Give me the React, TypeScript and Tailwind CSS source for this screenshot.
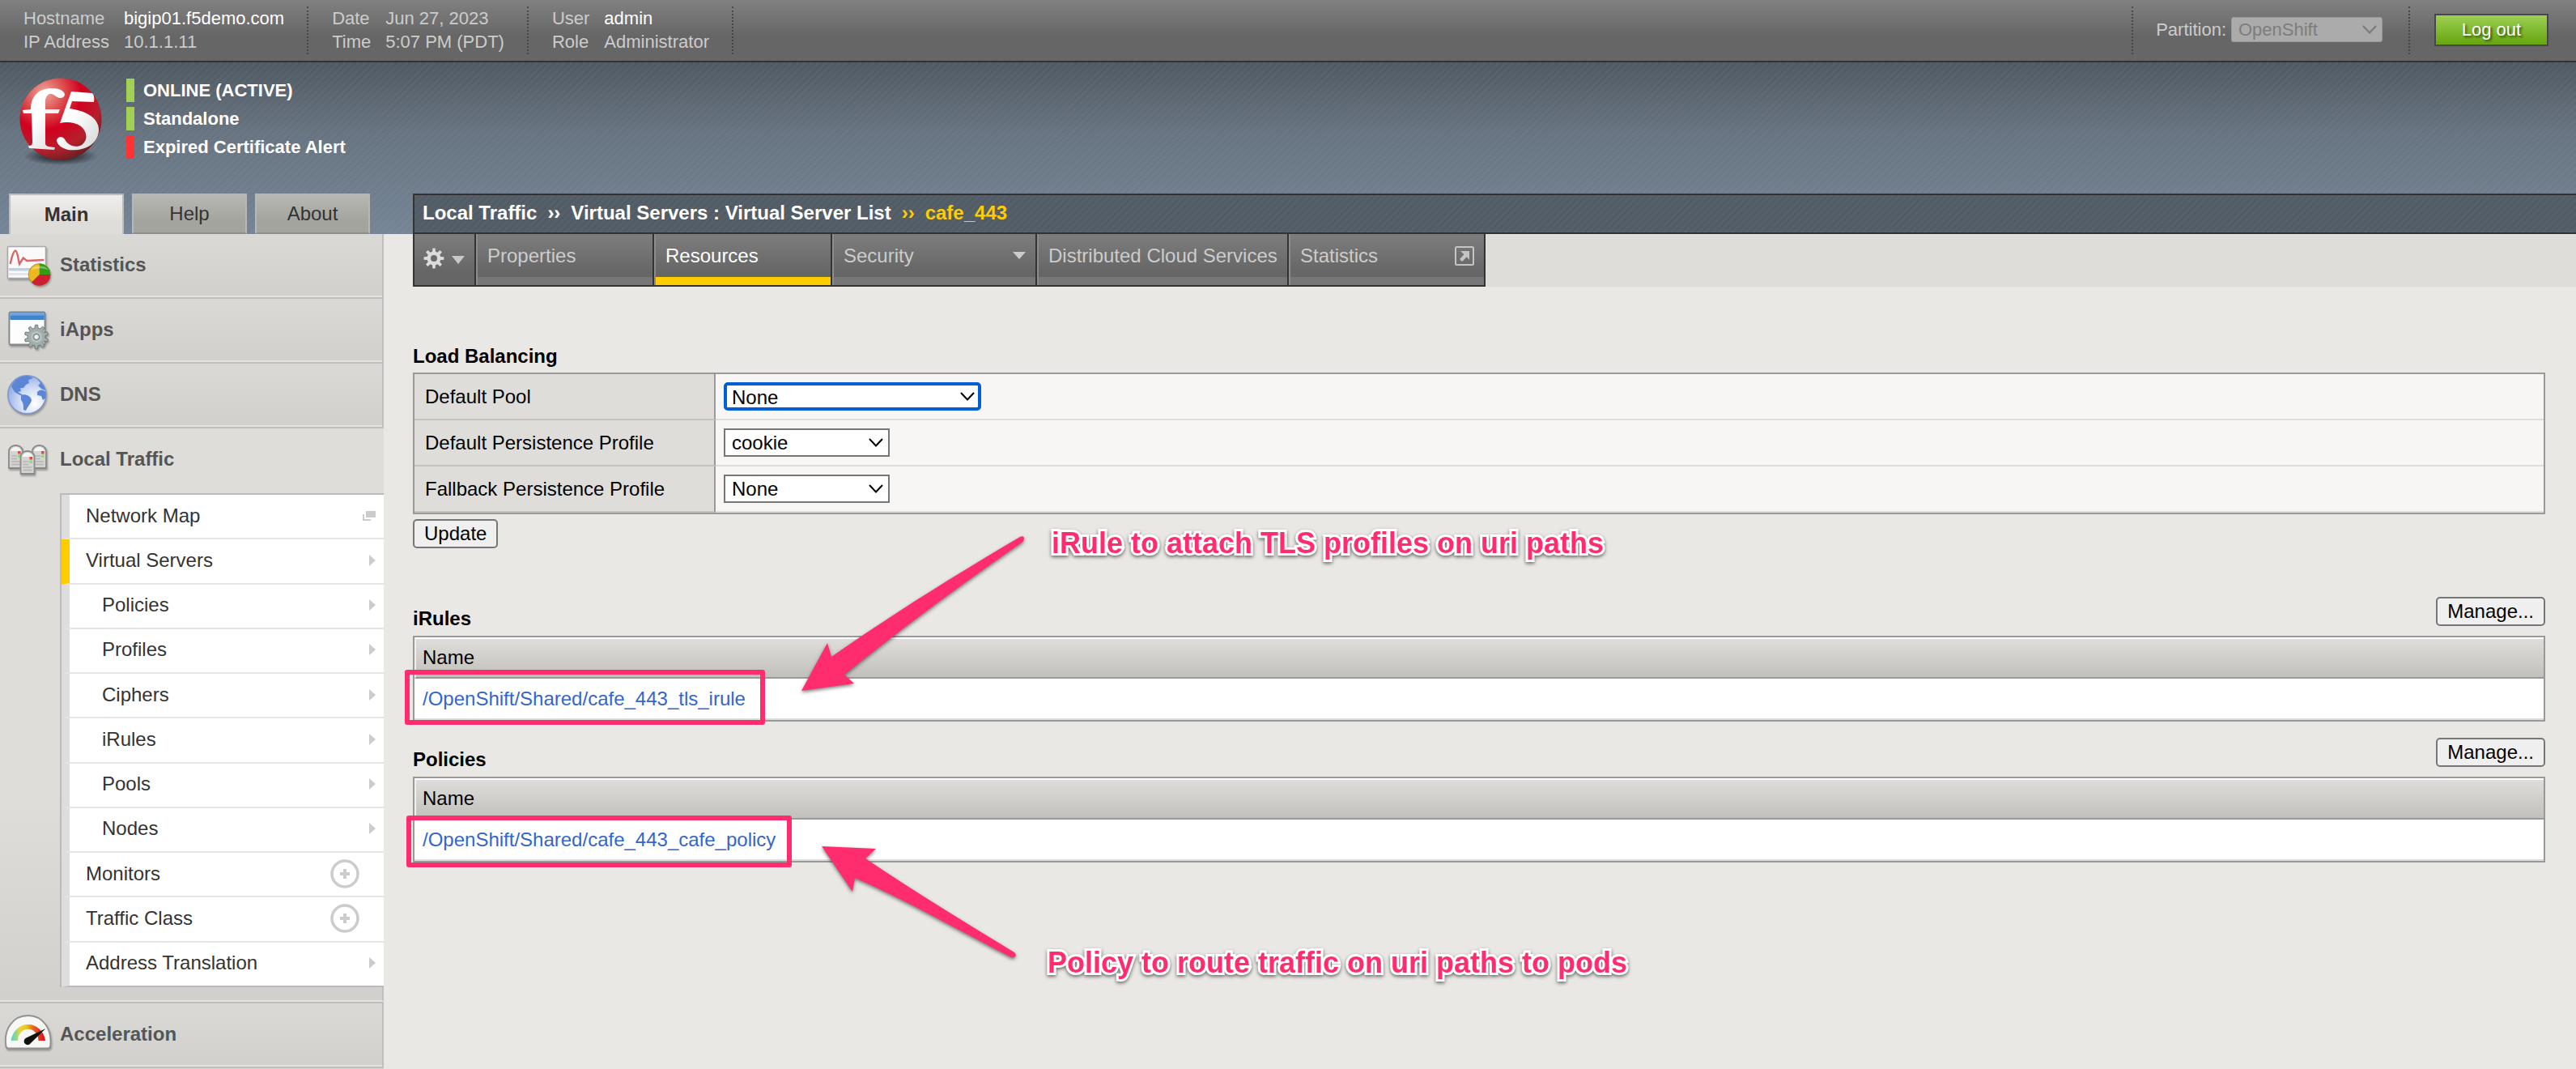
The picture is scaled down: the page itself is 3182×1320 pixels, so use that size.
import React from "react";

const STRIPES =
  "repeating-linear-gradient(135deg,rgba(255,255,255,0.03) 0px,rgba(255,255,255,0.03) 3px,rgba(255,255,255,0) 4px,rgba(255,255,255,0) 6px)";

function teeth(count: number, cx: number, cy: number, inner: number, outer: number) {
  const points: string[] = [];
  const step = (Math.PI * 2) / count;
  for (let i = 0; i < count; i++) {
    const a = i * step - Math.PI / 2;
    const corners: [number, number][] = [
      [-0.3, inner],
      [-0.17, outer],
      [0.17, outer],
      [0.3, inner],
    ];
    corners.forEach(([offset, r]) => {
      const t = a + offset * step;
      points.push(`${(cx + Math.cos(t) * r).toFixed(2)},${(cy + Math.sin(t) * r).toFixed(2)}`);
    });
  }
  return points.join(" ");
}

function Logo() {
  return (
    <svg viewBox="0 0 106 112" className="h-28 w-[106px] shrink-0" role="img" aria-label="f5">
      <defs>
        <radialGradient id="ball" cx="0.3" cy="0.18" r="0.9">
          <stop offset="0" stopColor="#f0a79c" />
          <stop offset="0.28" stopColor="#dc4a4c" />
          <stop offset="0.5" stopColor="#d1001f" />
          <stop offset="0.78" stopColor="#b5202c" />
          <stop offset="1" stopColor="#5c2020" />
        </radialGradient>
        <linearGradient id="mark" x1="0" y1="0" x2="1" y2="1">
          <stop offset="0.4" stopColor="#ffffff" />
          <stop offset="1" stopColor="#d4d4d4" />
        </linearGradient>
        <radialGradient id="ground">
          <stop offset="0.3" stopColor="#1c2126" stopOpacity="0.85" />
          <stop offset="1" stopColor="#1c2126" stopOpacity="0" />
        </radialGradient>
      </defs>
      <ellipse cx="53" cy="98" rx="46" ry="11" fill="url(#ground)" />
      <circle cx="53" cy="52" r="50.5" fill="url(#ball)" />
      <path
        d="M6 41 L16 40 C16 22 28 13 44 14 C52 14 58 18 58 22 C57 27 51 27 47 24 C42 19 35 20 34 29 L34 40 L52 40 L50 45 L34 45 L34 82 C34 86 38 86 46 87 L45 90 L14 88 L13 85 C17 85 18 84 18 80 L17 45 L7 45 Z"
        fill="url(#mark)"
      />
      <path
        d="M66 18 L92 20 C94 22 95 27 94 31 L67 30 L64 39 C86 42 101 52 100 67 C98 84 82 92 62 90 C54 88 48 83 48 78 C50 73 55 73 58 77 C62 85 72 88 79 84 C87 78 86 68 78 61 C71 56 61 55 52 57 Z"
        fill="url(#mark)"
      />
    </svg>
  );
}

function StatisticsIcon() {
  return (
    <svg viewBox="0 0 64 64" className="h-16 w-16 shrink-0 drop-shadow-[1px_2px_1px_rgba(0,0,0,0.3)]" aria-hidden="true">
      <rect x="5.5" y="9.5" width="47" height="39" rx="1" fill="#fafafa" stroke="#a9a9a9" strokeWidth="1.5" />
      <rect x="7" y="36" width="35" height="3.5" fill="#bcd0e6" />
      <rect x="7" y="42" width="30" height="3" fill="#dfe7f0" />
      <path d="M8.7 31 C10 25 12 15 15 14.5 C18 15 18.5 26 20 31 L24.7 23.5 L29.3 27 L50.3 26" fill="none" stroke="#d9666b" strokeWidth="2.4" />
      <circle cx="44.7" cy="44" r="13.5" fill="#edb920" stroke="#8d6b1a" strokeWidth="0.6" />
      <path d="M44.7 44 L44.7 30.5 A13.5 13.5 0 0 1 58.2 44 Z" fill="#2f9e14" />
      <path d="M44.7 44 L58.2 44 A13.5 13.5 0 0 1 35 53.5 Z" fill="#cf1d33" />
      <path d="M34 39 A12 9 0 0 1 56 39 A14 7 0 0 0 34 39" fill="#ffffff" opacity="0.35" />
    </svg>
  );
}

function IAppsIcon() {
  return (
    <svg viewBox="0 0 64 64" className="h-16 w-16 shrink-0 drop-shadow-[1px_2px_1px_rgba(0,0,0,0.3)]" aria-hidden="true">
      <rect x="7.5" y="10.5" width="44" height="40" rx="1.5" fill="#fdfdfd" stroke="#808488" strokeWidth="1.8" />
      <rect x="8.4" y="11.5" width="42.3" height="8.5" fill="#4284cb" />
      <rect x="8.4" y="11.5" width="42.3" height="3" fill="#6aa6e4" />
      <polygon points={teeth(10, 41, 41, 11, 14.8)} fill="#a3adac" stroke="#6f7978" strokeWidth="1" />
      <circle cx="41" cy="41" r="7" fill="#b8c1c0" />
      <circle cx="41" cy="41" r="3.5" fill="#eef0f0" stroke="#7b8584" strokeWidth="1.5" />
    </svg>
  );
}

function DnsIcon() {
  return (
    <svg viewBox="0 0 64 64" className="h-16 w-16 shrink-0 drop-shadow-[1px_2px_1px_rgba(0,0,0,0.3)]" aria-hidden="true">
      <defs>
        <radialGradient id="globe" cx="0.7" cy="0.72" r="0.8">
          <stop offset="0" stopColor="#ffffff" />
          <stop offset="0.5" stopColor="#d0dcf5" />
          <stop offset="1" stopColor="#88a8e4" />
        </radialGradient>
      </defs>
      <circle cx="29.3" cy="32.3" r="23.5" fill="url(#globe)" stroke="#7f96c6" strokeWidth="1.5" />
      <path d="M10 22 C14 13 22 9 31 9 L37 12 L31 14 L32 18 L28 20 L25 24 L21 24 L22 28 L18 29 L26 34 L21 33 L14 29 Z" fill="#5b85d6" />
      <path d="M22 33 C27 31 34 34 35 39 C34 44 30 47 28 52 L25 51 C25 46 25 42 22 39 Z" fill="#5b85d6" />
      <path d="M42 13 C47 16 51 22 52 27 L47 25 L43 21 L46 18 Z M42 29 C46 25 51 26 52.5 30 L52 37 L49 39 L47 34 L42 33 Z" fill="#5b85d6" />
    </svg>
  );
}

function ServerTower({ x, y }: { x: number; y: number }) {
  return (
    <g transform={`translate(${x} ${y})`}>
      <path d="M1 7 Q3 1 9.5 1 Q16 1 18 7 V29 H1 Z" fill="#d4d4d2" stroke="#8a8a8a" strokeWidth="1.8" strokeLinejoin="round" />
      <path d="M3 8 Q5 3 9.5 3 Q14 3 16 8 Z" fill="#f5f5f5" />
      <path d="M4 14 H11 M4 17.5 H11 M4 21 H15 M4 24.5 H15" stroke="#b5b5b5" strokeWidth="1.5" />
      <rect x="12" y="8" width="3.5" height="3.5" fill="#e5484a" />
      <rect x="12" y="12.5" width="3.5" height="3.5" fill="#8fdc78" />
    </g>
  );
}

function LocalTrafficIcon() {
  return (
    <svg viewBox="0 0 64 64" className="h-16 w-16 shrink-0 drop-shadow-[1px_2px_1px_rgba(0,0,0,0.3)]" aria-hidden="true">
      <ServerTower x={6} y={14} />
      <ServerTower x={35} y={14} />
      <ServerTower x={20.5} y={21} />
    </svg>
  );
}

function AccelerationIcon() {
  return (
    <svg viewBox="0 0 64 64" className="h-16 w-16 shrink-0 drop-shadow-[1px_2px_1px_rgba(0,0,0,0.3)]" aria-hidden="true">
      <defs>
        <linearGradient id="gauge" x1="0" y1="0" x2="1" y2="0">
          <stop offset="0" stopColor="#5fd3c8" />
          <stop offset="0.12" stopColor="#7fd6a8" />
          <stop offset="0.25" stopColor="#e6d53a" />
          <stop offset="0.45" stopColor="#ecc51f" />
          <stop offset="0.65" stopColor="#e8641d" />
          <stop offset="1" stopColor="#e00a17" />
        </linearGradient>
      </defs>
      <path d="M3.5 47 C0 26 12 9 30.7 9 C49 9 61 26 58 47 Q57.5 49.5 55 49.5 H6.5 Q4 49.5 3.5 47 Z" fill="#f7f7f5" stroke="#919191" strokeWidth="1.8" />
      <path d="M9.5 40 A21.5 23.5 0 0 1 52 40 H43.5 A12.5 14 0 0 0 18 40 Z" fill="url(#gauge)" />
      <path d="M52.5 25 L34 43 A4.5 4.5 0 1 1 28.5 36.5 Z" fill="#111111" />
    </svg>
  );
}

function Chevron({ className }: { className: string }) {
  return (
    <svg viewBox="0 0 18 11" className={className} aria-hidden="true">
      <path d="M1 1 L9 9.5 L17 1" fill="none" stroke="currentColor" strokeWidth="2" />
    </svg>
  );
}

function InfoBlock({ rows }: { rows: [string, string, boolean][] }) {
  return (
    <dl className="grid h-[59px] grid-cols-[auto_auto] content-start gap-x-[18px] border-r-2 border-dotted border-[#474747] pr-7 pl-[29px] text-[22px] leading-[29px] text-[#cccccc]">
      {rows.map(([label, value, strong]) => (
        <React.Fragment key={label}>
          <dt>{label}</dt>
          <dd className={strong ? "text-white" : ""}>{value}</dd>
        </React.Fragment>
      ))}
    </dl>
  );
}

function TopBar() {
  return (
    <header className="flex items-start border-b-2 border-[#333333] bg-[linear-gradient(#808080_0%,#666666_60%)] pt-2 pb-2">
      <InfoBlock
        rows={[
          ["Hostname", "bigip01.f5demo.com", true],
          ["IP Address", "10.1.1.11", false],
        ]}
      />
      <InfoBlock
        rows={[
          ["Date", "Jun 27, 2023", false],
          ["Time", "5:07 PM (PDT)", false],
        ]}
      />
      <InfoBlock
        rows={[
          ["User", "admin", true],
          ["Role", "Administrator", false],
        ]}
      />
      <div className="ml-auto flex items-start">
        <div className="flex h-[59px] items-center border-x-2 border-dotted border-[#474747] pr-8 pb-0.5 pl-7 text-[22px] text-[#cccccc]">
          <label htmlFor="partition" className="mr-1.5">
            Partition:
          </label>
          <div className="relative">
            <select
              id="partition"
              disabled
              className="block h-[31px] w-[187px] appearance-none rounded-[3px] border border-[#999999] bg-[#ababab] pl-2 leading-[28px] text-[#7d7d7d] opacity-100"
            >
              <option>OpenShift</option>
            </select>
            <Chevron className="pointer-events-none absolute top-[10px] right-[7px] h-[11px] w-[18px] text-[#7a7a7a]" />
          </div>
        </div>
        <button className="mt-[9px] mr-[34px] ml-[30px] h-10 w-[141px] border-2 border-[#474747] bg-[linear-gradient(#9dcf52,#66a60f)] text-[22px] leading-9 text-white [text-shadow:2px_2px_3px_rgba(0,0,0,0.6)]">
          Log out
        </button>
      </div>
    </header>
  );
}

function StatusLine({ tone, children }: { tone: string; children: string }) {
  return (
    <li className={`border-l-[10px] pl-[11px] ${tone}`}>{children}</li>
  );
}

function Banner() {
  return (
    <div
      className="flex"
      style={{ backgroundImage: `${STRIPES},linear-gradient(#4e5861 0%,#66727f 40%,#748495 100%)` }}
    >
      <div className="w-[510px] shrink-0 pt-[18px]">
        <div className="flex gap-7 pl-[22px]">
          <Logo />
          <ul className="flex flex-col gap-1.5 pt-0.5 text-[22px] leading-[29px] font-bold text-white">
            <StatusLine tone="border-[#a0d155]">ONLINE (ACTIVE)</StatusLine>
            <StatusLine tone="border-[#a0d155]">Standalone</StatusLine>
            <StatusLine tone="border-[#ff3333]">Expired Certificate Alert</StatusLine>
          </ul>
        </div>
        <nav className="mt-8 flex gap-2.5 pl-[11px] text-2xl text-[#333333]">
          <button className="h-[50px] w-[142px] border-2 border-b-0 border-[#bdbdbb] bg-[linear-gradient(#efeeec,#deddd9_70%)] font-bold">
            Main
          </button>
          <button className="h-[50px] w-[142px] border-2 border-[#b7b7b5] border-b-[#8f8f8c] bg-[linear-gradient(#b7b7b3,#a4a49e_70%)]">
            Help
          </button>
          <button className="h-[50px] w-[142px] border-2 border-[#b7b7b5] border-b-[#8f8f8c] bg-[linear-gradient(#b7b7b3,#a4a49e_70%)]">
            About
          </button>
        </nav>
      </div>
      <div
        className="flex h-[50px] flex-1 items-center gap-[13px] self-end border-y-2 border-l-2 border-[#333333] bg-[#515b65] pb-0.5 pl-[10px] text-2xl font-bold text-white"
        style={{ backgroundImage: STRIPES }}
      >
        <span>Local Traffic</span>
        <span>››</span>
        <span>Virtual Servers : Virtual Server List</span>
        <span className="text-[#ffcc00]">››</span>
        <span className="text-[#ffcc00]">cafe_443</span>
      </div>
    </div>
  );
}

function SideItem({ icon, label }: { icon: React.ReactNode; label: string }) {
  return (
    <li className="h-20 border-r-2 border-b-2 border-[#bfbfbf] bg-[linear-gradient(#dad9d5,#d1d0cc)]">
      <a href="#" className="flex h-full items-center gap-1.5 border-b-2 border-[#e4e3e0] pl-1 text-2xl font-bold text-[#555555]">
        {icon}
        {label}
      </a>
    </li>
  );
}

type SubKind = "arrow" | "plus" | "window";

const SUB_ITEMS: { label: string; kind: SubKind; nested?: boolean; active?: boolean }[] = [
  { label: "Network Map", kind: "window" },
  { label: "Virtual Servers", kind: "arrow", active: true },
  { label: "Policies", kind: "arrow", nested: true },
  { label: "Profiles", kind: "arrow", nested: true },
  { label: "Ciphers", kind: "arrow", nested: true },
  { label: "iRules", kind: "arrow", nested: true },
  { label: "Pools", kind: "arrow", nested: true },
  { label: "Nodes", kind: "arrow", nested: true },
  { label: "Monitors", kind: "plus" },
  { label: "Traffic Class", kind: "plus" },
  { label: "Address Translation", kind: "arrow" },
];

function SubMark({ kind }: { kind: SubKind }) {
  if (kind === "plus") {
    return (
      <svg viewBox="0 0 36 36" className="mr-[30px] h-9 w-9" aria-hidden="true">
        <circle cx="18" cy="18" r="16" fill="none" stroke="#cccccc" strokeWidth="3.5" />
        <path d="M18 12 V24 M12 18 H24" stroke="#cccccc" strokeWidth="4" />
      </svg>
    );
  }
  if (kind === "window") {
    return (
      <svg viewBox="0 0 16 12" className="mr-[10px] h-3 w-4" aria-hidden="true">
        <rect x="4" y="0" width="12" height="8" fill="#cccccc" />
        <path d="M1 4 V11 H10" fill="none" stroke="#cccccc" strokeWidth="2" />
      </svg>
    );
  }
  return (
    <svg viewBox="0 0 8 14" className="mr-[10px] h-3.5 w-2" aria-hidden="true">
      <path d="M0 0 L8 7 L0 14 Z" fill="#cccccc" />
    </svg>
  );
}

function Sidebar() {
  return (
    <aside className="w-[474px] shrink-0 bg-[#d5d4d0]">
      <ul>
        <SideItem icon={<StatisticsIcon />} label="Statistics" />
        <SideItem icon={<IAppsIcon />} label="iApps" />
        <SideItem icon={<DnsIcon />} label="DNS" />
        <li className="border-b-2 border-[#bfbfbf] bg-[linear-gradient(#deddd9_0%,#deddd9_65%,#d1d0cc_100%)]">
          <a href="#" className="flex h-20 items-center gap-1.5 pb-1 pl-1 text-2xl font-bold text-[#555555]">
            <LocalTrafficIcon />
            Local Traffic
          </a>
          <ul className="ml-[74px] flex h-[610px] flex-col border-t-2 border-l-2 border-[#bbbbbb] bg-white">
            {SUB_ITEMS.map((item) => (
              <li
                key={item.label}
                className={`flex flex-1 border-b-2 border-l-[10px] border-b-[#e5e5e5] last:border-b-[#bbbbbb] ${
                  item.active ? "border-l-[#ffcc00]" : "border-l-[#dddddd]"
                }`}
              >
                <a
                  href="#"
                  className={`flex flex-1 items-center justify-between pb-0.5 text-2xl text-[#333333] ${item.nested ? "pl-10" : "pl-5"}`}
                >
                  {item.label}
                  <SubMark kind={item.kind} />
                </a>
              </li>
            ))}
          </ul>
          <div className="h-[18px] border-r-2 border-b-2 border-r-[#bfbfbf] border-b-[#e4e3e0]" />
        </li>
        <SideItem icon={<AccelerationIcon />} label="Acceleration" />
      </ul>
    </aside>
  );
}

function Tab({ width, active, label, mark }: { width: string; active?: boolean; label: string; mark?: React.ReactNode }) {
  return (
    <a
      href="#"
      className={`flex flex-col border-r-2 border-l-2 border-r-[#333333] border-l-[#8c8c8c] bg-[linear-gradient(#7d7d7d,#666666_75%)] text-2xl ${width} ${
        active ? "text-white" : "text-[#cccccc]"
      }`}
    >
      <span className="flex h-[53px] items-center justify-between pr-3 pl-3 whitespace-nowrap">
        {label}
        {mark}
      </span>
      <span className={`h-[10px] ${active ? "bg-[#ffcc00]" : "bg-[#777777]"}`} />
    </a>
  );
}

function TabBar() {
  return (
    <div className="flex h-[65px] bg-[#deddd9]">
      <nav className="flex border-b-2 border-l-2 border-[#333333]">
        <button
          aria-label="Options"
          className="flex w-[76px] items-center gap-2 border-r-2 border-[#333333] bg-[linear-gradient(#7d7d7d,#666666_75%)] pb-1 pl-2.5"
        >
          <svg viewBox="0 0 28 28" className="h-7 w-7" aria-hidden="true">
            <polygon points={teeth(8, 14, 14, 8.5, 12.5)} fill="#dcdcdc" />
            <circle cx="14" cy="14" r="4" fill="#6b6b6b" />
          </svg>
          <svg viewBox="0 0 16 10" className="mt-1 h-2.5 w-4" aria-hidden="true">
            <path d="M0 0 H16 L8 10 Z" fill="#c8c8c8" />
          </svg>
        </button>
        <Tab width="w-[220px]" label="Properties" />
        <Tab width="w-[220px]" label="Resources" active />
        <Tab
          width="w-[253px]"
          label="Security"
          mark={
            <svg viewBox="0 0 16 9" className="h-[9px] w-4" aria-hidden="true">
              <path d="M0 0 H16 L8 9 Z" fill="#cccccc" />
            </svg>
          }
        />
        <Tab width="w-[311px]" label="Distributed Cloud Services" />
        <Tab
          width="w-[243px]"
          label="Statistics"
          mark={
            <svg viewBox="0 0 24 24" className="h-6 w-6" aria-hidden="true">
              <rect x="1" y="1" width="22" height="22" rx="1.5" fill="none" stroke="#c4c4c4" strokeWidth="2" />
              <path d="M7 6 H18 V17 L14.8 13.3 L9 19 L6 16 L11.5 10 Z" fill="#c4c4c4" />
            </svg>
          }
        />
      </nav>
    </div>
  );
}

function FieldRow({ id, label, value, width, focused }: { id: string; label: string; value: string; width: string; focused?: boolean }) {
  return (
    <tr className="h-[57px]">
      <th scope="row" className="w-[372px] border-r-2 border-b-2 border-r-[#999999] border-b-[#c3c2be] bg-[#deddd9] pl-[13px] text-left font-normal">
        <label htmlFor={id}>{label}</label>
      </th>
      <td className="border-b-2 border-[#dddddd] bg-[#f7f6f4] pl-[10px]">
        <div className={`relative ${width}`}>
          <select
            id={id}
            className={`block h-[35px] w-full appearance-none bg-white leading-[30px] text-black outline-none ${
              focused ? "rounded-[5px] border-4 border-[#005fd6] pl-1.5" : "border-2 border-[#767676] pl-2"
            }`}
          >
            <option>{value}</option>
          </select>
          <Chevron className="pointer-events-none absolute top-[12px] right-2 h-[11px] w-[18px]" />
        </div>
      </td>
    </tr>
  );
}

function PushButton({ children }: { children: string }) {
  return (
    <button className="h-9 rounded-[5px] border-2 border-[#767676] bg-[#efefef] px-3 leading-8 text-black">
      {children}
    </button>
  );
}

function ListSection({ title, entry, spacing }: { title: string; entry: string; spacing: string }) {
  return (
    <section className={spacing}>
      <div className="mb-[5px] flex h-[43px] items-start justify-between">
        <h2 className="self-end leading-8 font-bold">{title}</h2>
        <PushButton>Manage...</PushButton>
      </div>
      <table className="w-full border-separate border-spacing-0 border-2 border-[#999999]">
        <thead>
          <tr>
            <th
              scope="col"
              className="h-[51px] border-t-2 border-b-2 border-l-2 border-t-white border-b-[#999999] border-l-[#f0f0ee] bg-[linear-gradient(#deddd9,#c1c0bb)] pb-0.5 pl-2 text-left font-normal"
            >
              Name
            </th>
          </tr>
        </thead>
        <tbody>
          <tr>
            <td className="h-[51px] border-b-2 border-[#dddddd] bg-white pl-[10px]">
              <a href="#" className="text-[#3366cc]">
                {entry}
              </a>
            </td>
          </tr>
        </tbody>
      </table>
    </section>
  );
}

function Callout({ place, children }: { place: string; children: string }) {
  return (
    <p
      className={`absolute text-4xl leading-10 font-bold whitespace-nowrap text-[#ff2d6e] [-webkit-text-stroke:6px_white] [paint-order:stroke_fill] drop-shadow-[0px_2px_2px_rgba(0,0,0,0.55)] ${place}`}
    >
      {children}
    </p>
  );
}

function Annotations() {
  return (
    <div className="pointer-events-none">
      <div className="absolute top-[827px] left-[500px] h-[68px] w-[445px] rounded-[3px] border-[6px] border-[#ff2d6e]" />
      <div className="absolute top-[1007px] left-[502px] h-[64px] w-[476px] rounded-[3px] border-[6px] border-[#ff2d6e]" />
      <svg viewBox="0 0 300 210" className="absolute top-[655px] left-[980px] h-[210px] w-[300px] drop-shadow-[0px_2px_2px_rgba(0,0,0,0.5)]" aria-hidden="true">
        <path d="M10 198 L42 139 L47 156 C120 105 200 55 280 8 Q285 6 285 10 Q285 13 282 15 C210 65 135 120 63 178 L75 189 Z" fill="#ff2d6e" />
      </svg>
      <svg viewBox="0 0 260 160" className="absolute top-[1035px] left-[1005px] h-[160px] w-[260px] drop-shadow-[0px_2px_2px_rgba(0,0,0,0.5)]" aria-hidden="true">
        <path d="M10 10 L77 13 L64 25 C125 66 187 104 248 141 Q251 144 249 146 Q247 148 244 147 C178 113 115 77 51 49 L48 66 Z" fill="#ff2d6e" />
      </svg>
      <Callout place="top-[651px] left-[1299px]">iRule to attach TLS profiles on uri paths</Callout>
      <Callout place="top-[1169px] left-[1294px]">Policy to route traffic on uri paths to pods</Callout>
    </div>
  );
}

export default function App() {
  return (
    <div className="relative flex min-h-screen flex-col overflow-hidden bg-[#e9e8e4] font-['Liberation_Sans',Arial,sans-serif] text-2xl text-black">
      <TopBar />
      <Banner />
      <div className="flex flex-1">
        <Sidebar />
        <main className="min-w-0 flex-1 pl-9">
          <TabBar />
          <div className="pr-[38px]">
            <section className="mt-[70px]">
              <h2 className="mb-1 leading-8 font-bold">Load Balancing</h2>
              <table className="mb-1.5 w-full border-separate border-spacing-0 border-2 border-[#999999]">
                <tbody>
                  <FieldRow id="pool" label="Default Pool" value="None" width="w-[318px]" focused />
                  <FieldRow id="persistence" label="Default Persistence Profile" value="cookie" width="w-[205px]" />
                  <FieldRow id="fallback" label="Fallback Persistence Profile" value="None" width="w-[205px]" />
                </tbody>
              </table>
              <PushButton>Update</PushButton>
            </section>
            <ListSection title="iRules" entry="/OpenShift/Shared/cafe_443_tls_irule" spacing="mt-[60px]" />
            <ListSection title="Policies" entry="/OpenShift/Shared/cafe_443_cafe_policy" spacing="mt-5" />
          </div>
        </main>
      </div>
      <Annotations />
    </div>
  );
}
